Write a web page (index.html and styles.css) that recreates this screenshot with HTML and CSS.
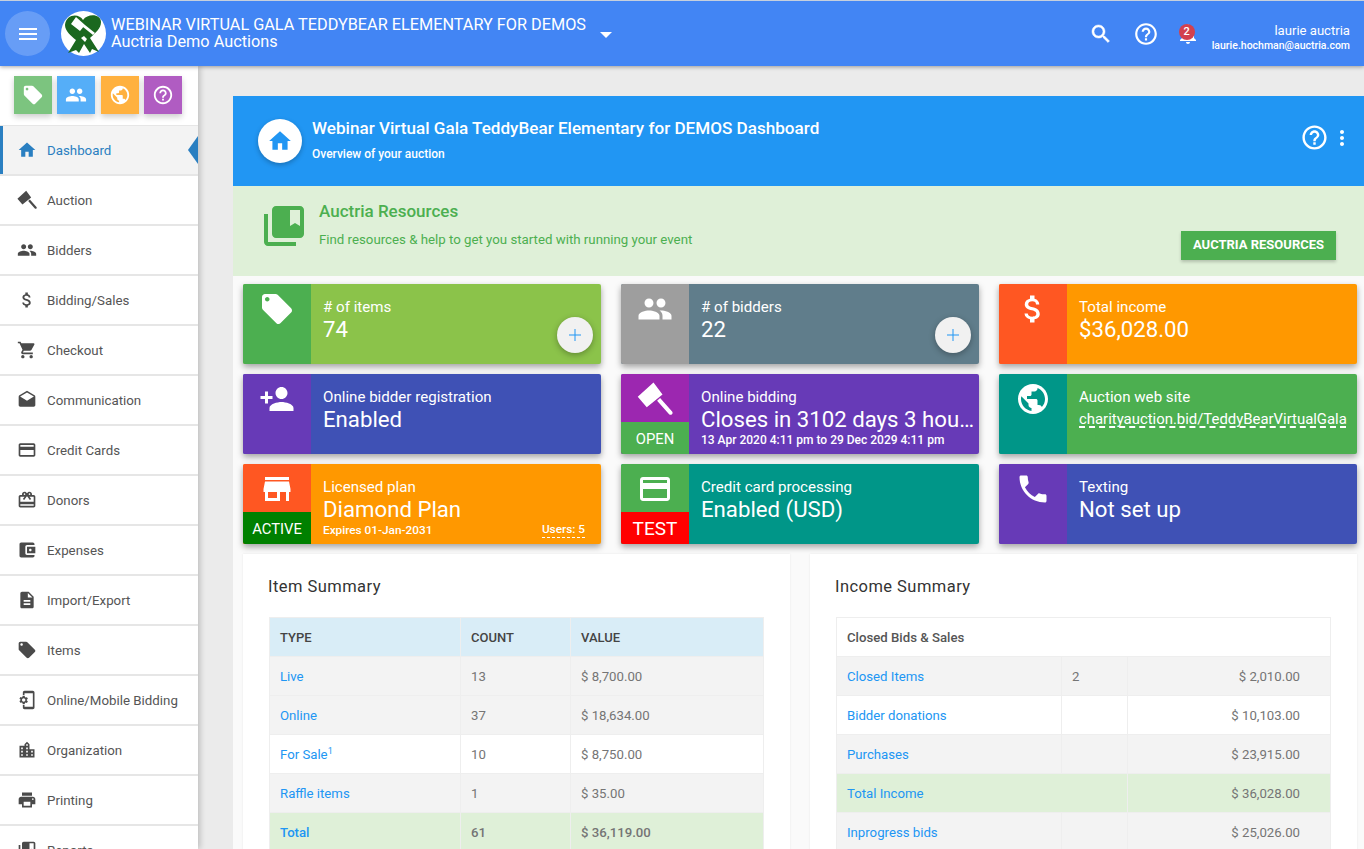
FILE: index.html
```html
<!DOCTYPE html>
<html lang="en">
<head>
<meta charset="utf-8">
<title>Dashboard</title>
<link rel="stylesheet" href="styles.css">
</head>
<body>
<svg class="defs" aria-hidden="true">
  <symbol id="home" viewBox="0 0 24 24"><path d="M10 20v-6h4v6h5v-8h3L12 3 2 12h3v8z"/></symbol>
  <symbol id="gavel" viewBox="0 0 24 24"><path d="M11 1l6 8-10.5 8.5-6-7zM13.4 13.2l2-1.9 8 9c.5.6.4 1.4-.1 1.9s-1.3.5-1.9 0z"/></symbol>
  <symbol id="people" viewBox="0 0 24 24"><path d="M16 11c1.66 0 2.99-1.34 2.99-3S17.66 5 16 5c-1.66 0-3 1.34-3 3s1.34 3 3 3zm-8 0c1.66 0 2.99-1.34 2.99-3S9.66 5 8 5C6.34 5 5 6.34 5 8s1.34 3 3 3zm0 2c-2.33 0-7 1.17-7 3.5V19h14v-2.5c0-2.33-4.67-3.5-7-3.5zm8 0c-.29 0-.62.02-.97.05 1.16.84 1.97 1.97 1.97 3.45V19h6v-2.5c0-2.33-4.67-3.5-7-3.5z"/></symbol>
  <symbol id="money" viewBox="0 0 24 24"><path d="M11.8 10.9c-2.27-.59-3-1.2-3-2.15 0-1.09 1.01-1.85 2.7-1.85 1.78 0 2.44.85 2.5 2.1h2.21c-.07-1.72-1.12-3.3-3.21-3.81V3h-3v2.16c-1.94.42-3.5 1.68-3.5 3.61 0 2.31 1.91 3.46 4.7 4.13 2.5.6 3 1.48 3 2.41 0 .69-.49 1.79-2.7 1.79-2.06 0-2.87-.92-2.98-2.1h-2.2c.12 2.19 1.76 3.42 3.68 3.83V21h3v-2.15c1.95-.37 3.5-1.5 3.5-3.55 0-2.84-2.43-3.81-4.7-4.4z"/></symbol>
  <symbol id="cart" viewBox="0 0 24 24"><path d="M7 18c-1.1 0-1.99.9-1.99 2S5.9 22 7 22s2-.9 2-2-.9-2-2-2zM1 2v2h2l3.6 7.59-1.35 2.45c-.16.28-.25.61-.25.96 0 1.1.9 2 2 2h12v-2H7.42c-.14 0-.25-.11-.25-.25l.03-.12.9-1.63h7.45c.75 0 1.41-.41 1.75-1.03l3.58-6.49c.08-.14.12-.31.12-.48 0-.55-.45-1-1-1H5.21l-.94-2H1zm16 16c-1.1 0-1.99.9-1.99 2s.89 2 1.99 2 2-.9 2-2-.9-2-2-2z"/></symbol>
  <symbol id="drafts" viewBox="0 0 24 24"><path d="M21.99 8c0-.72-.37-1.35-.94-1.7L12 1 2.95 6.3C2.38 6.65 2 7.28 2 8v10c0 1.1.9 2 2 2h16c1.1 0 2-.9 2-2l-.01-10zM12 13L3.74 7.84 12 3l8.26 4.84L12 13z"/></symbol>
  <symbol id="card" viewBox="0 0 24 24"><path d="M20 4H4c-1.11 0-1.99.89-1.99 2L2 18c0 1.11.89 2 2 2h16c1.11 0 2-.89 2-2V6c0-1.11-.89-2-2-2zm0 14H4v-6h16v6zm0-10H4V6h16v2z"/></symbol>
  <symbol id="gift" viewBox="0 0 24 24"><path d="M20 6h-2.18c.11-.31.18-.65.18-1 0-1.66-1.34-3-3-3-1.05 0-1.96.54-2.5 1.35l-.5.67-.5-.68C10.96 2.54 10.05 2 9 2 7.34 2 6 3.34 6 5c0 .35.07.69.18 1H4c-1.11 0-1.99.89-1.99 2L2 19c0 1.11.89 2 2 2h16c1.11 0 2-.89 2-2V8c0-1.11-.89-2-2-2zm-5-2c.55 0 1 .45 1 1s-.45 1-1 1-1-.45-1-1 .45-1 1-1zM9 4c.55 0 1 .45 1 1s-.45 1-1 1-1-.45-1-1 .45-1 1-1zm11 15H4v-2h16v2zm0-5H4V8h5.08L7 10.83 8.62 12 11 8.76l1-1.36 1 1.36L15.38 12 17 10.83 14.92 8H20v6z"/></symbol>
  <symbol id="wallet" viewBox="0 0 24 24"><path d="M21 18v1c0 1.1-.9 2-2 2H5c-1.11 0-2-.9-2-2V5c0-1.1.89-2 2-2h14c1.1 0 2 .9 2 2v1h-9c-1.11 0-2 .9-2 2v8c0 1.1.89 2 2 2h9zm-9-2h10V8H12v8zm4-2.5c-.83 0-1.5-.67-1.5-1.5s.67-1.5 1.5-1.5 1.5.67 1.5 1.5-.67 1.5-1.5 1.5z"/></symbol>
  <symbol id="doc" viewBox="0 0 24 24"><path d="M14 2H6c-1.1 0-1.99.9-1.99 2L4 20c0 1.1.89 2 1.99 2H18c1.1 0 2-.9 2-2V8l-6-6zm2 16H8v-2h8v2zm0-4H8v-2h8v2zm-3-5V3.5L18.5 9H13z"/></symbol>
  <symbol id="tag" viewBox="0 0 24 24"><path d="M21.41 11.58l-9-9C12.05 2.22 11.55 2 11 2H4c-1.1 0-2 .9-2 2v7c0 .55.22 1.05.59 1.42l9 9c.36.36.86.58 1.41.58.55 0 1.05-.22 1.41-.59l7-7c.37-.36.59-.86.59-1.41 0-.55-.23-1.06-.59-1.42zM5.5 7C4.67 7 4 6.33 4 5.5S4.67 4 5.5 4 7 4.67 7 5.5 6.33 7 5.5 7z"/></symbol>
  <symbol id="setup" viewBox="0 0 24 24"><path d="M11.8 12.5v-1l1.1-.8c.1-.1.1-.2.1-.3l-1-1.7c-.1-.1-.2-.2-.3-.1l-1.3.4c-.3-.2-.6-.4-.9-.5l-.2-1.3c0-.1-.1-.2-.3-.2H7c-.1 0-.2.1-.3.2l-.2 1.3c-.3.1-.6.3-.9.5l-1.3-.5c-.1 0-.2 0-.3.1l-1 1.7c-.1.1 0 .2.1.3l1.1.8v1l-1.1.8c-.1.2-.1.3-.1.4l1 1.7c.1.1.2.2.3.1l1.4-.4c.3.2.6.4.9.5l.2 1.3c-.1.1.1.2.2.2h2c.1 0 .2-.1.3-.2l.2-1.3c.3-.1.6-.3.9-.5l1.3.5c.1 0 .2 0 .3-.1l1-1.7c.1-.1 0-.2-.1-.3l-1.1-.9zM8 14c-1.1 0-2-.9-2-2s.9-2 2-2 2 .9 2 2-.9 2-2 2zM19 1H9c-1.1 0-2 .9-2 2v3h2V4h10v16H9v-2H7v3c0 1.1.9 2 2 2h10c1.1 0 2-.9 2-2V3c0-1.1-.9-2-2-2z"/></symbol>
  <symbol id="city" viewBox="0 0 24 24"><path d="M15 11V5l-3-3-3 3v2H3v14h18V11h-6zm-8 8H5v-2h2v2zm0-4H5v-2h2v2zm0-4H5V9h2v2zm6 8h-2v-2h2v2zm0-4h-2v-2h2v2zm0-4h-2V9h2v2zm0-4h-2V5h2v2zm6 12h-2v-2h2v2zm0-4h-2v-2h2v2z"/></symbol>
  <symbol id="print" viewBox="0 0 24 24"><path d="M19 8H5c-1.66 0-3 1.34-3 3v6h4v4h12v-4h4v-6c0-1.66-1.34-3-3-3zm-3 11H8v-5h8v5zm3-7c-.55 0-1-.45-1-1s.45-1 1-1 1 .45 1 1-.45 1-1 1zm-1-9H6v4h12V3z"/></symbol>
  <symbol id="books" viewBox="0 0 24 24"><path d="M4 6H2v14c0 1.1.9 2 2 2h14v-2H4V6zm16-4H8c-1.1 0-2 .9-2 2v12c0 1.1.9 2 2 2h12c1.1 0 2-.9 2-2V4c0-1.1-.9-2-2-2zm0 10l-2.5-1.5L15 12V4h5v8z"/></symbol>
  <symbol id="help" viewBox="0 0 24 24"><path d="M11 18h2v-2h-2v2zm1-16C6.48 2 2 6.48 2 12s4.48 10 10 10 10-4.48 10-10S17.52 2 12 2zm0 18c-4.41 0-8-3.59-8-8s3.59-8 8-8 8 3.59 8 8-3.59 8-8 8zm0-14c-2.21 0-4 1.79-4 4h2c0-1.1.9-2 2-2s2 .9 2 2c0 2-3 1.75-3 5h2c0-2.25 3-2.5 3-5 0-2.21-1.79-4-4-4z"/></symbol>
  <symbol id="search" viewBox="0 0 24 24"><path d="M15.5 14h-.79l-.28-.27C15.41 12.59 16 11.11 16 9.5 16 5.91 13.09 3 9.5 3S3 5.91 3 9.5 5.91 16 9.5 16c1.61 0 3.09-.59 4.23-1.57l.27.28v.79l5 4.99L20.49 19l-4.99-5zm-6 0C7.01 14 5 11.99 5 9.5S7.01 5 9.5 5 14 7.01 14 9.5 11.99 14 9.5 14z"/></symbol>
  <symbol id="bell" viewBox="0 0 24 24"><path d="M12 22c1.1 0 2-.9 2-2h-4c0 1.1.89 2 2 2zm6-6v-5c0-3.07-1.64-5.64-4.5-6.32V4c0-.83-.67-1.5-1.5-1.5s-1.5.67-1.5 1.5v.68C7.63 5.36 6 7.92 6 11v5l-2 2v1h16v-1l-2-2z"/></symbol>
  <symbol id="more" viewBox="0 0 24 24"><path d="M12 8c1.1 0 2-.9 2-2s-.9-2-2-2-2 .9-2 2 .9 2 2 2zm0 2c-1.1 0-2 .9-2 2s.9 2 2 2 2-.9 2-2-.9-2-2-2zm0 6c-1.1 0-2 .9-2 2s.9 2 2 2 2-.9 2-2-.9-2-2-2z"/></symbol>
  <symbol id="globe" viewBox="0 0 24 24"><path d="M12 2C6.48 2 2 6.48 2 12s4.48 10 10 10 10-4.48 10-10S17.52 2 12 2zm-1 17.93c-3.95-.49-7-3.85-7-7.93 0-.62.08-1.21.21-1.79L9 15v1c0 1.1.9 2 2 2v1.93zm6.9-2.54c-.26-.81-1-1.39-1.9-1.39h-1v-3c0-.55-.45-1-1-1H8v-2h2c.55 0 1-.45 1-1V7h2c1.1 0 2-.9 2-2v-.41c2.93 1.19 5 4.06 5 7.41 0 2.08-.8 3.97-2.1 5.39z"/></symbol>
  <symbol id="personadd" viewBox="0 0 24 24"><path d="M15 12c2.21 0 4-1.79 4-4s-1.79-4-4-4-4 1.79-4 4 1.79 4 4 4zm-9-2V7H4v3H1v2h3v3h2v-3h3v-2H6zm9 4c-2.67 0-8 1.34-8 4v2h16v-2c0-2.66-5.33-4-8-4z"/></symbol>
  <symbol id="store" viewBox="0 0 24 24"><path d="M20 4H4v2h16V4zm1 10v-2l-1-5H4l-1 5v2h1v6h10v-6h4v6h2v-6h1zm-9 4H6v-4h6v4z"/></symbol>
  <symbol id="phone" viewBox="0 0 24 24"><path d="M6.62 10.79c1.44 2.83 3.76 5.14 6.59 6.59l2.2-2.2c.27-.27.67-.36 1.02-.24 1.12.37 2.33.57 3.57.57.55 0 1 .45 1 1V20c0 .55-.45 1-1 1-9.39 0-17-7.61-17-17 0-.55.45-1 1-1h3.5c.55 0 1 .45 1 1 0 1.25.2 2.45.57 3.57.11.35.03.74-.25 1.02l-2.2 2.2z"/></symbol>
</svg>

<header class="topbar">
  <button class="menu-btn" aria-label="Menu">
    <svg class="ic-menu" viewBox="0 0 18 14"><path d="M0 1h18v2H0zM0 6h18v2H0zM0 11h18v2H0z"/></svg>
  </button>
  <svg class="logo" viewBox="0 0 45 45">
    <circle cx="22.5" cy="22.5" r="22.5" fill="#fff"/>
    <path fill="#1b681f" d="M22 9C18 2 5 3 4 14c0 6 6 11 11 15L7 42l8-3 3 3 5-9 6 9 2-4 7 3-9-14c5-5 11-9 11-16C40 3 27 2 22 9z"/>
    <path fill="#fff" d="M15 6l9 8-5 6-9-7zM22 16l2-2 10 8-2 2zM20 27l3-2 3 3-2 3z"/>
  </svg>
  <div class="event">
    <div class="event-name">WEBINAR VIRTUAL GALA TEDDYBEAR ELEMENTARY FOR DEMOS</div>
    <div class="event-org">Auctria Demo Auctions</div>
  </div>
  <span class="caret"></span>
  <div class="top-actions">
    <svg class="ic ic-search"><use href="#search"/></svg>
    <svg class="ic ic-help"><use href="#help"/></svg>
    <div class="bell">
      <svg class="ic ic-bell"><use href="#bell"/></svg>
      <span class="bell-count">2</span>
    </div>
    <div class="user">
      <div class="user-name">laurie auctria</div>
      <div class="user-mail">laurie.hochman@auctria.com</div>
    </div>
  </div>
</header>

<div class="layout">
  <aside class="sidebar">
    <div class="quick">
      <a class="quick-btn q-green"><svg class="ic"><use href="#tag"/></svg></a>
      <a class="quick-btn q-blue"><svg class="ic"><use href="#people"/></svg></a>
      <a class="quick-btn q-orange"><svg class="ic"><use href="#globe"/></svg></a>
      <a class="quick-btn q-purple"><svg class="ic"><use href="#help"/></svg></a>
    </div>
    <nav class="nav">
      <a class="nav-item active"><svg class="ic"><use href="#home"/></svg>Dashboard</a>
      <a class="nav-item"><svg class="ic"><use href="#gavel"/></svg>Auction</a>
      <a class="nav-item"><svg class="ic"><use href="#people"/></svg>Bidders</a>
      <a class="nav-item"><svg class="ic"><use href="#money"/></svg>Bidding/Sales</a>
      <a class="nav-item"><svg class="ic"><use href="#cart"/></svg>Checkout</a>
      <a class="nav-item"><svg class="ic"><use href="#drafts"/></svg>Communication</a>
      <a class="nav-item"><svg class="ic"><use href="#card"/></svg>Credit Cards</a>
      <a class="nav-item"><svg class="ic"><use href="#gift"/></svg>Donors</a>
      <a class="nav-item"><svg class="ic"><use href="#wallet"/></svg>Expenses</a>
      <a class="nav-item"><svg class="ic"><use href="#doc"/></svg>Import/Export</a>
      <a class="nav-item"><svg class="ic"><use href="#tag"/></svg>Items</a>
      <a class="nav-item"><svg class="ic"><use href="#setup"/></svg>Online/Mobile Bidding</a>
      <a class="nav-item"><svg class="ic"><use href="#city"/></svg>Organization</a>
      <a class="nav-item"><svg class="ic"><use href="#print"/></svg>Printing</a>
      <a class="nav-item"><svg class="ic"><use href="#books"/></svg>Reports</a>
    </nav>
  </aside>

  <main class="main">
    <div class="content">
      <section class="hero">
        <div class="hero-circle"><svg class="ic"><use href="#home"/></svg></div>
        <div class="hero-text">
          <h1>Webinar Virtual Gala TeddyBear Elementary for DEMOS Dashboard</h1>
          <p>Overview of your auction</p>
        </div>
        <svg class="ic hero-help"><use href="#help"/></svg>
        <svg class="ic hero-more"><use href="#more"/></svg>
      </section>

      <section class="resources">
        <svg class="ic res-icon"><use href="#books"/></svg>
        <div class="res-text">
          <h2>Auctria Resources</h2>
          <p>Find resources &amp; help to get you started with running your event</p>
        </div>
        <a class="res-btn">AUCTRIA RESOURCES</a>
      </section>

      <section class="cards">
        <div class="card b-lime">
          <div class="card-side s-green"><div class="side-top"><svg class="ic"><use href="#tag"/></svg></div></div>
          <div class="card-body"><div class="label"># of items</div><div class="value">74</div></div>
          <a class="fab"><svg viewBox="0 0 12 12"><path d="M5.5 0h1v5.5H12v1H6.5V12h-1V6.5H0v-1h5.5z"/></svg></a>
        </div>
        <div class="card b-slate">
          <div class="card-side s-grey"><div class="side-top"><svg class="ic"><use href="#people"/></svg></div></div>
          <div class="card-body"><div class="label"># of bidders</div><div class="value">22</div></div>
          <a class="fab"><svg viewBox="0 0 12 12"><path d="M5.5 0h1v5.5H12v1H6.5V12h-1V6.5H0v-1h5.5z"/></svg></a>
        </div>
        <div class="card b-orange">
          <div class="card-side s-deep"><div class="side-top"><svg class="ic"><use href="#money"/></svg></div></div>
          <div class="card-body"><div class="label">Total income</div><div class="value">$36,028.00</div></div>
        </div>

        <div class="card b-indigo">
          <div class="card-side s-violet"><div class="side-top"><svg class="ic"><use href="#personadd"/></svg></div></div>
          <div class="card-body"><div class="label">Online bidder registration</div><div class="value">Enabled</div></div>
        </div>
        <div class="card b-violet">
          <div class="card-side s-purple"><div class="side-top"><svg class="ic"><use href="#gavel"/></svg></div><div class="badge bg-green">OPEN</div></div>
          <div class="card-body"><div class="label">Online bidding</div><div class="value">Closes in 3102 days 3 hours</div><div class="note">13 Apr 2020 4:11 pm to 29 Dec 2029 4:11 pm</div></div>
        </div>
        <div class="card b-green">
          <div class="card-side s-teal"><div class="side-top"><svg class="ic"><use href="#globe"/></svg></div></div>
          <div class="card-body"><div class="label">Auction web site</div><div class="value-link"><a>charityauction.bid/TeddyBearVirtualGala</a></div></div>
        </div>

        <div class="card b-orange">
          <div class="card-side s-deep"><div class="side-top"><svg class="ic"><use href="#store"/></svg></div><div class="badge bg-dkgreen">ACTIVE</div></div>
          <div class="card-body"><div class="label">Licensed plan</div><div class="value">Diamond Plan</div>
            <div class="note note-row"><span>Expires 01-Jan-2031</span><span class="users">Users: 5</span></div></div>
        </div>
        <div class="card b-teal">
          <div class="card-side s-green"><div class="side-top"><svg class="ic"><use href="#card"/></svg></div><div class="badge bg-red">TEST</div></div>
          <div class="card-body"><div class="label">Credit card processing</div><div class="value">Enabled (USD)</div></div>
        </div>
        <div class="card b-indigo">
          <div class="card-side s-violet"><div class="side-top"><svg class="ic"><use href="#phone"/></svg></div></div>
          <div class="card-body"><div class="label">Texting</div><div class="value">Not set up</div></div>
        </div>
      </section>

      <section class="panels">
        <div class="panel">
          <h3>Item Summary</h3>
          <table class="tbl tbl-items">
            <colgroup><col class="c-i1"><col class="c-i2"><col></colgroup>
            <thead><tr><th>TYPE</th><th>COUNT</th><th>VALUE</th></tr></thead>
            <tbody>
              <tr class="grey"><td><a>Live</a></td><td>13</td><td>$ 8,700.00</td></tr>
              <tr class="grey"><td><a>Online</a></td><td>37</td><td>$ 18,634.00</td></tr>
              <tr><td><a>For Sale<sup>1</sup></a></td><td>10</td><td>$ 8,750.00</td></tr>
              <tr class="grey"><td><a>Raffle items</a></td><td>1</td><td>$ 35.00</td></tr>
              <tr class="total strong"><td><a>Total</a></td><td>61</td><td>$ 36,119.00</td></tr>
            </tbody>
          </table>
        </div>
        <div class="panel">
          <h3>Income Summary</h3>
          <table class="tbl tbl-income">
            <colgroup><col class="c-n1"><col class="c-n2"><col></colgroup>
            <tbody>
              <tr><td class="group" colspan="3">Closed Bids &amp; Sales</td></tr>
              <tr class="grey"><td><a>Closed Items</a></td><td>2</td><td class="num">$ 2,010.00</td></tr>
              <tr><td><a>Bidder donations</a></td><td></td><td class="num">$ 10,103.00</td></tr>
              <tr class="grey"><td><a>Purchases</a></td><td></td><td class="num">$ 23,915.00</td></tr>
              <tr class="total"><td colspan="2"><a>Total Income</a></td><td class="num">$ 36,028.00</td></tr>
              <tr class="grey"><td><a>Inprogress bids</a></td><td></td><td class="num">$ 25,026.00</td></tr>
            </tbody>
          </table>
        </div>
      </section>
    </div>
  </main>
</div>
</body>
</html>
```

FILE: styles.css
```css
* { box-sizing: border-box; }
html, body { height: 849px; overflow: hidden; }
body { margin: 0; background: #ebebeb; font-family: Roboto, "Liberation Sans", sans-serif; color: #555; }
.defs { display: none; }
h1, h2, h3, p { margin: 0; font-weight: 400; }
.ic { display: block; fill: currentColor; flex: none; }

/* top bar */
.topbar { position: relative; z-index: 3; height: 66px; display: flex; align-items: center; background: #4285f4; border-top: 1px solid #c6d0dd; color: #fff; box-shadow: 0 1px 4px rgba(0,0,0,.35); padding-left: 5px; }
.menu-btn { width: 45px; height: 45px; border: 0; border-radius: 50%; background: rgba(255,255,255,.2); display: flex; align-items: center; justify-content: center; padding: 0; }
.ic-menu { width: 18px; height: 14px; fill: #fff; }
.logo { width: 45px; height: 45px; margin-left: 11px; flex: none; }
.event { margin: -2px 0 0 5px; }
.event-name { font-size: 16.25px; line-height: 17px; }
.event-org { font-size: 16.3px; line-height: 17px; }
.caret { width: 0; height: 0; margin-left: 14px; margin-top: 2px; border-left: 6px solid transparent; border-right: 6px solid transparent; border-top: 6px solid #fff; }
.top-actions { margin-left: auto; display: flex; align-items: center; padding-right: 14px; }
.ic-search { width: 24px; height: 24px; stroke: currentColor; stroke-width: .5; }
.ic-help { width: 26px; height: 26px; margin-left: 20px; }
.bell { position: relative; margin-left: 17px; width: 24px; height: 24px; }
.ic-bell { width: 24px; height: 24px; }
.bell-count { position: absolute; left: 3px; top: 2px; width: 16px; height: 16px; border-radius: 50%; background: #d2404e; font-size: 11px; font-weight: 500; line-height: 16px; text-align: center; }
.user { margin: 8px 0 0 12px; text-align: right; }
.user-name { font-size: 13.1px; line-height: 16px; }
.user-mail { font-size: 10.5px; font-weight: 500; line-height: 15px; margin-top: -1px; }

/* layout */
.layout { display: flex; height: 783px; overflow: hidden; }
.sidebar { width: 198px; flex: none; background: #fff; box-shadow: 2px 0 6px rgba(0,0,0,.2); position: relative; z-index: 2; }
.quick { height: 59px; padding: 10px 14px 0; display: flex; gap: 5.33px; }
.quick-btn { width: 38px; height: 38px; display: flex; align-items: center; justify-content: center; color: #fff; box-shadow: 0 3px 6px rgba(0,0,0,.2); }
.quick-btn .ic { width: 22px; height: 22px; }
.q-green { background: #7cc47f; }
.q-blue { background: #55aef8; }
.q-orange { background: #ffb13f; }
.q-purple { background: #b05cc2; }

.nav { border-top: 1px solid #e6e6e6; }
.nav-item { position: relative; height: 50px; padding-left: 17px; display: flex; align-items: center; gap: 10px; font-size: 13.3px; color: #555; border-bottom: 2px solid #e6e6e6; }
.nav-item .ic { width: 20px; height: 20px; color: #4a4a4a; }
.nav-item.active { background: #f3f3f3; color: #2a7fc1; box-shadow: inset 3px 0 0 #2a7fc1; }
.nav-item.active .ic { color: #2a7fc1; }
.nav-item.active::after { content: ""; position: absolute; right: 0; top: 10px; border-top: 14px solid transparent; border-bottom: 14px solid transparent; border-right: 10px solid #2a7fc1; }

/* main */
.main { flex: 1; min-width: 0; padding: 30px 0 0 35px; }
.content { background: #fafafa; height: 800px; }
.hero { height: 90px; background: #2196f3; color: #fff; display: flex; align-items: center; padding: 0 10px 0 25px; }
.hero-circle { width: 44px; height: 44px; border-radius: 50%; background: #fff; color: #2196f3; display: flex; align-items: center; justify-content: center; box-shadow: 0 2px 5px rgba(0,0,0,.25); }
.hero-circle .ic { width: 26px; height: 26px; }
.hero-text { margin: -4px 0 0 10px; flex: 1; }
.hero-text h1 { font-size: 17.1px; font-weight: 500; line-height: 20px; }
.hero-text p { font-size: 12px; font-weight: 500; line-height: 14px; margin-top: 9px; }
.hero-help { width: 29px; height: 29px; margin-top: -8px; }
.hero-more { width: 24px; height: 24px; margin: -6px 0 0 1px; }

.resources { height: 90px; background: #dff0d8; color: #4caf50; display: flex; padding: 0 28px 0 27px; }
.res-icon { width: 48px; height: 48px; margin-top: 16px; }
.res-text { margin-left: 11px; flex: 1; }
.res-text h2 { font-size: 17px; font-weight: 500; line-height: 20px; margin-top: 15px; }
.res-text p { font-size: 13.25px; line-height: 16px; margin-top: 11px; }
.res-btn { align-self: flex-start; margin-top: 45px; width: 155px; height: 29px; background: #4caf50; color: #fff; font-size: 13px; font-weight: 700; line-height: 28px; text-align: center; box-shadow: 0 2px 3px rgba(0,0,0,.2); }

/* cards */
.cards { display: grid; grid-template-columns: repeat(3, 358px); grid-auto-rows: 80px; gap: 10px 20px; padding: 8px 0 0 10px; }
.card { position: relative; display: flex; border-radius: 2px; color: #fff; box-shadow: 0 3px 6px rgba(0,0,0,.35); }
.card-side { width: 68px; flex: none; display: flex; flex-direction: column; border-radius: 2px 0 0 2px; overflow: hidden; }
.side-top { flex: 1; padding-top: 7px; display: flex; justify-content: center; }
.side-top .ic { width: 36px; height: 36px; }
.badge { height: 32px; font-size: 14.8px; line-height: 35px; text-align: center; flex: none; }
.bg-green { background: #4caf50; }
.bg-dkgreen { background: #008000; }
.bg-red { background: #ff0000; font-size: 19px; line-height: 34px; }
.card-body { flex: 1; min-width: 0; padding: 14px 4px 0 12px; border-radius: 0 2px 2px 0; }
.label { font-size: 15.1px; line-height: 18px; }
.value { font-size: 22.2px; line-height: 27px; white-space: nowrap; overflow: hidden; text-overflow: ellipsis; }
.value-link { font-size: 14.9px; line-height: 20px; margin-top: 3px; white-space: nowrap; }
.value-link a { text-decoration: underline dashed #fff 2px; text-underline-offset: 2px; text-decoration-skip-ink: none; }
.note { font-size: 12px; font-weight: 500; line-height: 14px; }
.note-row { display: flex; justify-content: space-between; padding-right: 12px; font-size: 11.8px; }
.users { border-bottom: 1px dashed #fff; height: 15px; line-height: 13px; }
.fab { position: absolute; right: 8px; bottom: 11px; width: 36px; height: 36px; border-radius: 50%; background: #f1f1f1; box-shadow: 0 2px 6px rgba(0,0,0,.3); display: flex; align-items: center; justify-content: center; }
.fab svg { width: 12px; height: 12px; fill: #2196f3; }
.s-green { background: #4caf50; }
.s-grey { background: #9e9e9e; }
.s-deep { background: #ff5722; }
.s-violet { background: #673ab7; }
.s-purple { background: #9c27b0; }
.s-teal { background: #009688; }
.b-lime { background: #8bc34a; }
.b-slate { background: #607d8b; }
.b-orange { background: #ff9800; }
.b-indigo { background: #3f51b5; }
.b-violet { background: #673ab7; }
.b-green { background: #4caf50; }
.b-teal { background: #009688; }

/* panels */
.panels { display: grid; grid-template-columns: 547px 547px; gap: 20px; padding: 10px 0 0 10px; }
.panel { background: #fff; padding: 0 26px; height: 320px; box-shadow: 0 0 2px rgba(0,0,0,.08); }
.panel h3 { font-size: 16.5px; line-height: 20px; color: #333; padding-top: 23px; box-sizing: content-box; margin: 0 0 20px -1px; letter-spacing: .45px; }
.tbl { width: 495px; border-collapse: collapse; table-layout: fixed; font-size: 13.2px; color: #757575; }
.tbl th, .tbl td { height: 39px; border: 1px solid #eee; padding: 0 10px; text-align: left; }
.tbl th { background: #d9edf7; color: #444; font-weight: 500; font-size: 13px; }
.tbl a { color: #2196f3; }
.tbl sup { font-size: 9px; line-height: 0; }
.grey { background: #f3f3f3; }
.total { background: #dff0d8; }
.strong td { font-weight: 500; }
.group { font-weight: 500; color: #555; }
.tbl .num { text-align: right; padding-right: 30px; }
.c-i1 { width: 191px; }
.c-i2 { width: 110px; }
.c-n1 { width: 225px; }
.c-n2 { width: 66px; }
```
